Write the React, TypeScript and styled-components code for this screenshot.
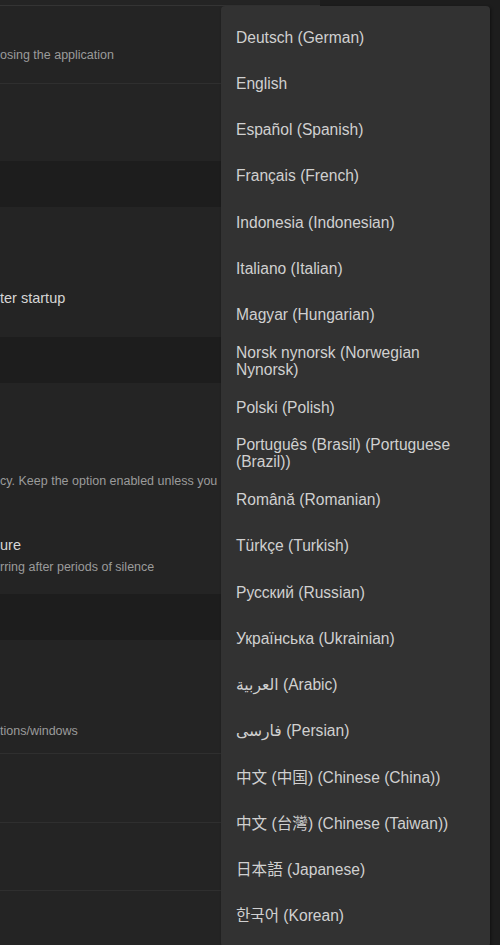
import styled, { createGlobalStyle } from "styled-components";

const GlobalStyle = createGlobalStyle`
  html, body {
    margin: 0;
    padding: 0;
    background: #1d1d1d;
    overflow: hidden;
  }
`;

const languages = [
  "Deutsch (German)",
  "English",
  "Español (Spanish)",
  "Français (French)",
  "Indonesia (Indonesian)",
  "Italiano (Italian)",
  "Magyar (Hungarian)",
  "Norsk nynorsk (Norwegian Nynorsk)",
  "Polski (Polish)",
  "Português (Brasil) (Portuguese (Brazil))",
  "Română (Romanian)",
  "Türkçe (Turkish)",
  "Русский (Russian)",
  "Українська (Ukrainian)",
  "العربية (Arabic)",
  "فارسی (Persian)",
  "中文 (中国) (Chinese (China))",
  "中文 (台灣) (Chinese (Taiwan))",
  "日本語 (Japanese)",
  "한국어 (Korean)",
];

const Page = styled.div`
  position: relative;
  height: 945px;
  overflow: hidden;
  background: #1d1d1d;
  font-family: "Liberation Sans", Arial, "Noto Sans CJK SC", "DejaVu Sans",
    sans-serif;
`;

const Settings = styled.div`
  width: 320px;
  display: flex;
  flex-direction: column;
`;

const TopEdge = styled.div`
  box-sizing: border-box;
  height: 6px;
  background: #242424;
  border-bottom: 1px solid #343434;
`;

const Section = styled.div`
  display: flex;
  flex-direction: column;
  background: #242424;
`;

const SectionHeader = styled.div`
  height: 46px;
  background: #1d1d1d;
`;

const Row = styled.div<{ $h: number; $top: number; $divider?: boolean }>`
  box-sizing: border-box;
  height: ${(p) => p.$h}px;
  padding-top: ${(p) => p.$top}px;
  display: flex;
  flex-direction: column;
  gap: 5px;
  border-bottom: ${(p) => (p.$divider ? "1px solid #2f2f2f" : "none")};
`;

const Title = styled.div`
  font-size: 14.5px;
  line-height: 18px;
  color: #d6d6d6;
  white-space: nowrap;
`;

const Desc = styled.div`
  font-size: 12.5px;
  line-height: 16px;
  color: #9b9b9b;
  white-space: nowrap;
`;

const Menu = styled.div`
  position: absolute;
  left: 221px;
  top: 6px;
  width: 269px;
  padding: 8px 0;
  background: #323232;
  border-radius: 4px;
  box-shadow: 1px 1px 3px rgba(0, 0, 0, 0.45);
`;

const MenuItem = styled.div`
  box-sizing: border-box;
  min-height: 46.25px;
  padding: 0 15px;
  display: flex;
  align-items: center;
  font-size: 15.6px;
  line-height: 17px;
  color: #d0d0d0;
`;

export default function App() {
  return (
    <Page>
      <GlobalStyle />
      <Settings>
        <TopEdge />
        <Section>
          <Row $h={78} $top={41} $divider>
            <Desc>osing the application</Desc>
          </Row>
          <Row $h={77} $top={0} />
        </Section>
        <SectionHeader />
        <Section>
          <Row $h={130} $top={82}>
            <Title>ter startup</Title>
          </Row>
        </Section>
        <SectionHeader />
        <Section>
          <Row $h={129} $top={90}>
            <Desc>cy. Keep the option enabled unless you have</Desc>
          </Row>
          <Row $h={82} $top={24}>
            <Title>ure</Title>
            <Desc>rring after periods of silence</Desc>
          </Row>
        </Section>
        <SectionHeader />
        <Section>
          <Row $h={114} $top={83} $divider>
            <Desc>tions/windows</Desc>
          </Row>
          <Row $h={69} $top={0} $divider />
          <Row $h={68} $top={0} $divider />
          <Row $h={70} $top={0} />
        </Section>
      </Settings>
      <Menu>
        {languages.map((lang) => (
          <MenuItem key={lang}>{lang}</MenuItem>
        ))}
      </Menu>
    </Page>
  );
}
